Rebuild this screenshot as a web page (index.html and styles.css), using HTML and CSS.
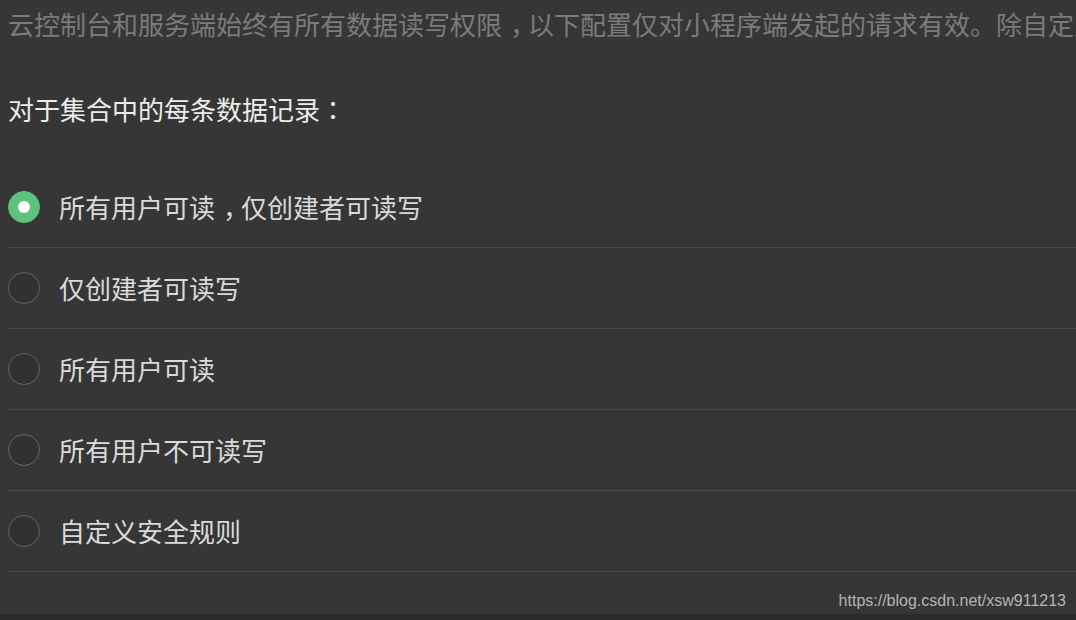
FILE: index.html
```html
<!DOCTYPE html>
<html lang="zh-CN">
<head>
    <meta charset="UTF-8">
    <meta name="viewport" content="width=device-width, initial-scale=1.0">
    <title>数据权限设置</title>
    <link rel="stylesheet" href="styles.css">
</head>
<body>
    <main class="page">
        <p class="tip">云控制台和服务端始终有所有数据读写权限<span class="comma">，</span>以下配置仅对小程序端发起的请求有效。除自定义安全规则外<span class="comma">，</span>其余选项均为简易权限配置。</p>
        <h2 class="title">对于集合中的每条数据记录<span class="colon" lang="zh-TW">：</span></h2>
        <ul class="options">
            <li class="option checked"><span class="radio"></span><span class="label">所有用户可读<span class="comma">，</span>仅创建者可读写</span></li>
            <li class="option"><span class="radio"></span><span class="label">仅创建者可读写</span></li>
            <li class="option"><span class="radio"></span><span class="label">所有用户可读</span></li>
            <li class="option"><span class="radio"></span><span class="label">所有用户不可读写</span></li>
            <li class="option"><span class="radio"></span><span class="label">自定义安全规则</span></li>
        </ul>
        <div class="watermark">https://blog.csdn.net/xsw911213</div>
    </main>
</body>
</html>
```

FILE: styles.css
```css
body {
    margin: 0;
    padding: 0;
    background-color: #2b2b2b;
    font-family: "Noto Sans CJK SC", "Noto Sans", sans-serif;
    overflow: hidden;
}
.page {
    position: relative;
    height: 614px;
    padding-left: 8px;
    background-color: #363636;
    box-sizing: border-box;
}
/* 逗号、冒号在字框内居中 */
.comma {
    margin-left: 8px;
    margin-right: -8px;
}
.colon {
    font-family: "Noto Sans CJK TC", sans-serif;
}
.tip {
    margin: 0;
    font-size: 26px;
    line-height: 48px;
    color: #7b7b7b;
    white-space: nowrap;
    overflow: hidden;
}
.title {
    margin: 36px 0 0;
    font-size: 26px;
    font-weight: normal;
    line-height: 50px;
    color: #ececec;
}
.options {
    list-style: none;
    margin: 33px 0 0;
    padding: 0;
}
.option {
    display: flex;
    align-items: center;
    height: 80px;
    border-bottom: 1px solid #4a4a4a;
}
.radio {
    width: 32px;
    height: 32px;
    border: 1px solid #646464;
    border-radius: 50%;
    box-sizing: border-box;
    background-color: #313131;
    display: flex;
    align-items: center;
    justify-content: center;
    flex-shrink: 0;
}
.checked .radio {
    border-color: #5ec27f;
    background-color: #5ec27f;
}
.checked .radio::after {
    content: "";
    width: 12px;
    height: 12px;
    border-radius: 50%;
    background-color: #fff;
}
.label {
    margin-left: 19px;
    padding-bottom: 2px;
    font-size: 26px;
    color: #dadada;
}
.watermark {
    position: absolute;
    right: 10px;
    bottom: 4px;
    font-family: "Liberation Sans", Arial, sans-serif;
    font-size: 16px;
    color: #b5b5b5;
}
```
